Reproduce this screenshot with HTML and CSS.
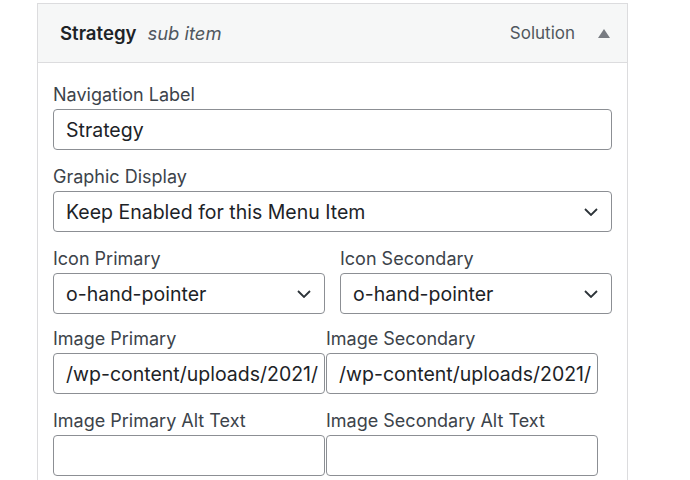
FILE: index.html
```html
<!DOCTYPE html>
<html>
<head>
<meta charset="utf-8">
<link rel="stylesheet" href="styles.css">
</head>
<body>
<div class="item">
  <div class="item-bar">
    <div class="item-title"><span class="title">Strategy</span><span class="sub">sub item</span></div>
    <div class="item-controls"><span class="type">Solution</span><span class="toggle"></span></div>
  </div>
  <div class="settings">
    <div class="field">
      <label class="lbl">Navigation Label</label>
      <div class="box">Strategy</div>
    </div>
    <div class="field">
      <label class="lbl">Graphic Display</label>
      <div class="box select">Keep Enabled for this Menu Item<svg class="chev" viewBox="0 0 14 8"><path d="M1 1l6 6 6-6" fill="none" stroke="#2c3338" stroke-width="1.8"/></svg></div>
    </div>
    <div class="row row-wide">
      <div class="field">
        <label class="lbl">Icon Primary</label>
        <div class="box select">o-hand-pointer<svg class="chev" viewBox="0 0 14 8"><path d="M1 1l6 6 6-6" fill="none" stroke="#2c3338" stroke-width="1.8"/></svg></div>
      </div>
      <div class="field">
        <label class="lbl">Icon Secondary</label>
        <div class="box select">o-hand-pointer<svg class="chev" viewBox="0 0 14 8"><path d="M1 1l6 6 6-6" fill="none" stroke="#2c3338" stroke-width="1.8"/></svg></div>
      </div>
    </div>
    <div class="row row-tight row-first">
      <div class="field">
        <label class="lbl">Image Primary</label>
        <div class="box clip">/wp-content/uploads/2021/</div>
      </div>
      <div class="field">
        <label class="lbl">Image Secondary</label>
        <div class="box clip">/wp-content/uploads/2021/</div>
      </div>
    </div>
    <div class="row row-tight">
      <div class="field">
        <label class="lbl">Image Primary Alt Text</label>
        <div class="box"></div>
      </div>
      <div class="field">
        <label class="lbl">Image Secondary Alt Text</label>
        <div class="box"></div>
      </div>
    </div>
  </div>
</div>
</body>
</html>
```
FILE: styles.css
```css
html, body {
  margin: 0;
  padding: 0;
  background: #ffffff;
}
body {
  font-family: Inter, "Noto Sans", "Liberation Sans", sans-serif;
  color: #1d2327;
  padding: 3px 0 0 37px;
  height: 480px;
  overflow: hidden;
  box-sizing: border-box;
}
.item {
  width: 589px;
  border: 1px solid #dcdcde;
  border-bottom: none;
  height: 480px;
}
.item-bar {
  height: 58px;
  background: #f6f7f7;
  border-bottom: 1px solid #dcdcde;
  display: flex;
  align-items: center;
  justify-content: space-between;
  padding: 0 17px 0 22px;
}
.title {
  font-weight: 600;
  font-size: 18.6px;
  color: #1d2327;
}
.sub {
  font-style: italic;
  font-size: 18.4px;
  color: #50575e;
  margin-left: 11px;
}
.item-controls {
  display: flex;
  align-items: center;
}
.type {
  font-size: 17px;
  color: #50575e;
}
.toggle {
  width: 0;
  height: 0;
  border-left: 6px solid transparent;
  border-right: 6px solid transparent;
  border-bottom: 9px solid #787c82;
  margin-left: 23px;
}
.settings {
  padding: 5px 15px 0 15px;
}
.field {
  margin-top: 16px;
  display: flex;
  flex-direction: column;
}
.lbl {
  font-size: 18px;
  line-height: 22px;
  color: #3c434a;
  margin-bottom: 3px;
  white-space: nowrap;
}
.box {
  box-sizing: border-box;
  height: 41px;
  border: 1px solid #8c8f94;
  border-radius: 4px;
  padding: 1px 12px 0 12px;
  font-size: 19.5px;
  line-height: 38px;
  color: #1d2327;
  background: #fff;
  white-space: nowrap;
  overflow: hidden;
}
.select {
  display: flex;
  align-items: center;
  justify-content: space-between;
  padding-right: 13px;
}
.chev {
  width: 14px;
  height: 8px;
  flex: none;
}
.clip {
  padding-right: 8px;
}
.row {
  display: grid;
  grid-template-columns: 272px 272px;
}
.row-wide {
  column-gap: 15px;
}
.row-tight {
  column-gap: 1px;
}
.row-first .field {
  margin-top: 14px;
}
```
